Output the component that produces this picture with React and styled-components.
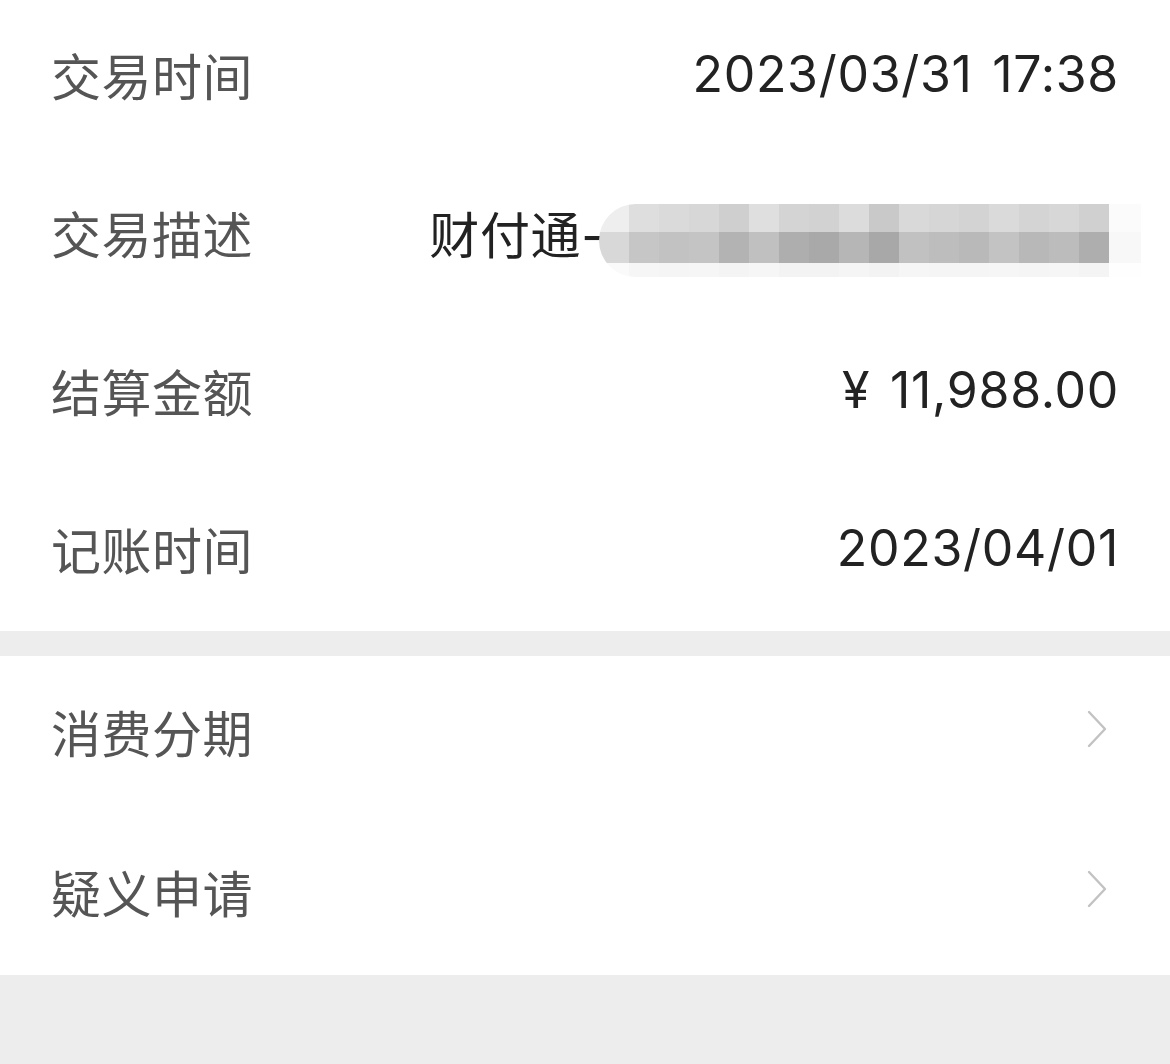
import React from 'react'
import styled, { createGlobalStyle } from 'styled-components'

const GlobalStyle = createGlobalStyle`
  html, body {
    margin: 0;
    padding: 0;
    background: #ededed;
  }
  body {
    font-family: Inter, "Noto Sans CJK SC", sans-serif;
  }
`

const Page = styled.div`
  width: 1170px;
  height: 1064px;
  background: #ededed;
  overflow: hidden;
`

const Section = styled.div`
  background: #fff;
  margin-bottom: ${p => p.$gap || 0}px;
`

const Row = styled.div`
  height: ${p => p.$h}px;
  display: flex;
  align-items: center;
  justify-content: space-between;
  padding: 0 51px 10px 51px;
  box-sizing: border-box;
`

const Label = styled.div`
  font-size: 50px;
  color: #555555;
  letter-spacing: 0.5px;
`

const Value = styled.div`
  display: flex;
  align-items: center;
  font-size: 50px;
  color: #222222;
  letter-spacing: 0.7px;
  word-spacing: 5px;
  white-space: pre;
`

const Mosaic = styled.div`
  display: grid;
  grid-template-columns: repeat(17, 30px) 32px;
  grid-template-rows: 28px 31px 14px;
  margin-left: -6px;
  margin-right: -22px;
  margin-top: 17px;
  border-radius: 38px 0 0 38px;
  overflow: hidden;
`

const Cell = styled.div`
  background: ${p => p.$c};
`

const Chevron = styled.svg`
  width: 22px;
  height: 40px;
  margin-right: 11px;
  margin-top: -4px;
`

const top = ['#eeeeee', '#dedede', '#dadada', '#d7d7d7', '#cfcfcf', '#dfdfdf', '#d4d4d4', '#d2d2d2', '#dcdcdc', '#c9c9c9', '#d9d9d9', '#d6d6d6', '#d3d3d3', '#dadada', '#d4d4d4', '#d7d7d7', '#d0d0d0', '#fbfbfb']
const mid = ['#d8d8d8', '#c6c6c6', '#c2c2c2', '#c4c4c4', '#b3b3b3', '#c0c0c0', '#aeaeae', '#a9a9a9', '#b6b6b6', '#a8a8a8', '#c1c1c1', '#bdbdbd', '#b9b9b9', '#c3c3c3', '#b8b8b8', '#bcbcbc', '#aeaeae', '#f8f8f8']
const low = ['#fafafa', '#f6f6f6', '#f5f5f5', '#f6f6f6', '#f4f4f4', '#f6f6f6', '#f3f3f3', '#f3f3f3', '#f5f5f5', '#f3f3f3', '#f6f6f6', '#f5f5f5', '#f5f5f5', '#f6f6f6', '#f5f5f5', '#f6f6f6', '#f4f4f4', '#fefefe']

const Arrow = () => (
  <Chevron viewBox="0 0 22 40">
    <path d="M3 3 L19 20 L3 37" fill="none" stroke="#c2c2c2" strokeWidth="2.4" strokeLinecap="round" strokeLinejoin="round" />
  </Chevron>
)

export default function App() {
  return (
    <Page>
      <GlobalStyle />
      <Section $gap={25}>
        <Row $h={158}>
          <Label>交易时间</Label>
          <Value>2023/03/31 17:38</Value>
        </Row>
        <Row $h={158}>
          <Label>交易描述</Label>
          <Value>
            财付通-
            <Mosaic>
              {[...top, ...mid, ...low].map((c, i) => <Cell key={i} $c={c} />)}
            </Mosaic>
          </Value>
        </Row>
        <Row $h={158}>
          <Label>结算金额</Label>
          <Value>¥ 11,988.00</Value>
        </Row>
        <Row $h={157}>
          <Label>记账时间</Label>
          <Value>2023/04/01</Value>
        </Row>
      </Section>
      <Section>
        <Row $h={160}>
          <Label>消费分期</Label>
          <Arrow />
        </Row>
        <Row $h={159}>
          <Label>疑义申请</Label>
          <Arrow />
        </Row>
      </Section>
    </Page>
  )
}
